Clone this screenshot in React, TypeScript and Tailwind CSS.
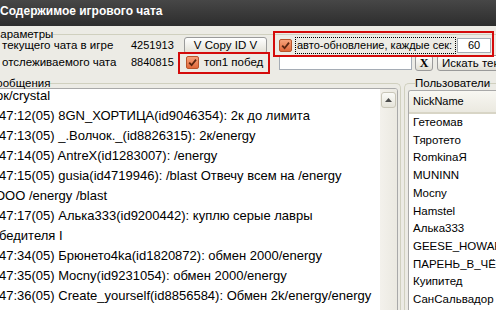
const messages = [
  { text: 'ок/crystal', cls: '-ml-[3px]' },
  { text: '47:12(05) 8GN_ХОРТИЦА(id9046354): 2к до лимита', cls: '' },
  { text: '47:13(05) _.Волчок._(id8826315): 2к/energy', cls: '' },
  { text: '47:14(05) AntreX(id1283007): /energy', cls: '' },
  { text: '47:15(05) gusia(id4719946): /blast Отвечу всем на /energy', cls: '' },
  { text: 'ООО /energy /blast', cls: '-ml-[4px]' },
  { text: '47:17(05) Алька333(id9200442): куплю серые лавры', cls: '' },
  { text: 'бедителя I', cls: '' },
  { text: '47:34(05) Брюнето4ka(id1820872): обмен 2000/energy', cls: '' },
  { text: '47:35(05) Mocny(id9231054): обмен 2000/energy', cls: '' },
  { text: '47:36(05) Create_yourself(id8856584): Обмен 2k/energy/energy', cls: '' },
];

const users = [
  'Гетеомав',
  'Тяротето',
  'RomkinaЯ',
  'MUNINN',
  'Mocny',
  'Hamstel',
  'Алька333',
  'GEESE_HOWARD',
  'ПАРЕНЬ_В_ЧЁРНОМ',
  'Куипитед',
  'СанСальвадор',
  'horoboro',
];

function Check() {
  return (
    <span className="flex h-[13px] w-[13px] shrink-0 items-center justify-center rounded-[2px] border border-[#b8552c] bg-gradient-to-b from-[#f6a27a] to-[#e0683a]">
      <svg width="9" height="9" viewBox="0 0 9 9">
        <path d="M1.2 4.6 L3.6 7.2 L8 1.6" fill="none" stroke="#5a2510" strokeWidth="1.8" />
      </svg>
    </span>
  );
}

export default function App() {
  return (
    <div className="relative h-[310px] w-[496px] overflow-hidden bg-[#ecebe5] font-['Liberation_Sans',Arial,sans-serif] text-[11px] text-black">
      {/* title bar */}
      <div className="h-[26px] whitespace-nowrap bg-gradient-to-b from-[#474747] to-[#2d2d2d] pt-[4px] text-[12px] font-bold leading-[14px] text-white">
        Содержимое игрового чата
      </div>

      {/* parameters */}
      <fieldset className="-ml-[20px] mt-[2px] h-[49px] w-[560px] rounded-[4px] border border-b-0 border-[#d0d0bf]">
        <legend className="ml-[11px] text-[11.5px] leading-[12px]">Параметры</legend>
        <div className="-mt-[3px] pl-[21px]">
          <div className="flex h-[17px] items-center whitespace-nowrap">
            <span className="w-[129px] text-[11.5px]">текущего чата в игре</span>
            <span className="w-[53px]">4251913</span>
            <div className="w-[95px]">
              <button className="h-[17px] w-[83px] rounded-[3px] border border-[#9a9a9a] bg-gradient-to-b from-white to-[#e2e0d6] text-[11.5px] leading-[15px]">
                V Copy ID V
              </button>
            </div>
            <Check />
            <span className="ml-[3px] h-[17px] w-[161px] border border-dotted border-black px-[1px] leading-[15px]">
              авто-обновление, каждые сек:
            </span>
            <span className="ml-[1px] h-[15px] w-[34px] border border-[#a5acb5] bg-white text-center leading-[13px]">60</span>
          </div>
          <div className="flex h-[17px] items-center whitespace-nowrap">
            <span className="w-[129px] text-[11.5px]">отслеживаемого чата</span>
            <span className="w-[53px]">8840815</span>
            <div className="flex w-[95px] items-center pl-[2px]">
              <Check />
              <span className="ml-[5px] text-[11.5px]">топ1 побед</span>
            </div>
            <span className="h-[15px] w-[133px] border border-[#a5acb5] bg-white" />
            <button className="ml-[3px] h-[16px] w-[18px] rounded-[3px] border border-[#9a9a9a] bg-gradient-to-b from-white to-[#e2e0d6] font-['Liberation_Serif',serif] text-[12px] font-bold leading-[14px]">
              X
            </button>
            <button className="ml-[4px] h-[16px] w-[90px] shrink-0 rounded-[3px] border border-[#9a9a9a] bg-gradient-to-b from-white to-[#e2e0d6] pl-[4px] text-left text-[11.5px] leading-[14px]">
              Искать текст
            </button>
          </div>
        </div>
      </fieldset>

      {/* messages + users */}
      <div className="flex h-[233px]">
        <fieldset className="-ml-[20px] w-[421px] shrink-0 rounded-tr-[5px] border-t border-r border-[#d0d0bf]">
          <legend className="ml-[8px] text-[11.5px] leading-[12px]">Сообщения</legend>
          <div className="-mt-[1px] mr-[2px] flex h-[224px] overflow-hidden rounded-tr-[3px] border border-[#a9a9a9] bg-white">
            <div className="min-w-0 flex-1 overflow-hidden pl-[18px]">
              <div className="-mt-[3px] whitespace-nowrap text-[13px] leading-[20px]">
                {messages.map((m, i) => (
                  <div key={i} className={m.cls}>
                    {m.text}
                  </div>
                ))}
              </div>
            </div>
            <div className="w-[17px] shrink-0 bg-gradient-to-r from-[#f3f1ec] to-[#ebe9e1] pt-[3px]">
              <div className="mx-[1px] flex h-[16px] items-center justify-center rounded-[3px] border border-[#c9c6b8] bg-gradient-to-b from-[#fafaf7] to-[#e6e4da]">
                <svg width="7" height="4" viewBox="0 0 7 4">
                  <path d="M0 4 L3.5 0 L7 4 Z" fill="#4d4d4d" />
                </svg>
              </div>
            </div>
          </div>
        </fieldset>

        <fieldset className="ml-[3px] w-[120px] shrink-0 rounded-tl-[5px] border-t border-l border-[#d0d0bf]">
          <legend className="ml-[10px] text-[11.5px] leading-[12px]">Пользователи</legend>
          <div className="ml-[3px] mt-[1px] h-[230px] overflow-hidden rounded-tl-[3px] border-t border-l border-[#a9a9a9] bg-white">
            <div className="flex h-[23px] items-center border-b-2 border-[#d8d5c6] bg-gradient-to-b from-[#f8f7f2] to-[#ebe9e0] pl-[4px]">
              NickName
            </div>
            {users.map((u) => (
              <div key={u} className="whitespace-nowrap pl-[4px] text-[11.5px] leading-[17.7px]">
                {u}
              </div>
            ))}
          </div>
        </fieldset>
      </div>

      {/* red annotation frames */}
      <div className="pointer-events-none absolute left-[273px] top-[31px] h-[26px] w-[221px] border-2 border-[#d40b0b]" />
      <div className="pointer-events-none absolute left-[178px] top-[52px] h-[22px] w-[92px] border-2 border-[#d40b0b]" />
    </div>
  );
}
